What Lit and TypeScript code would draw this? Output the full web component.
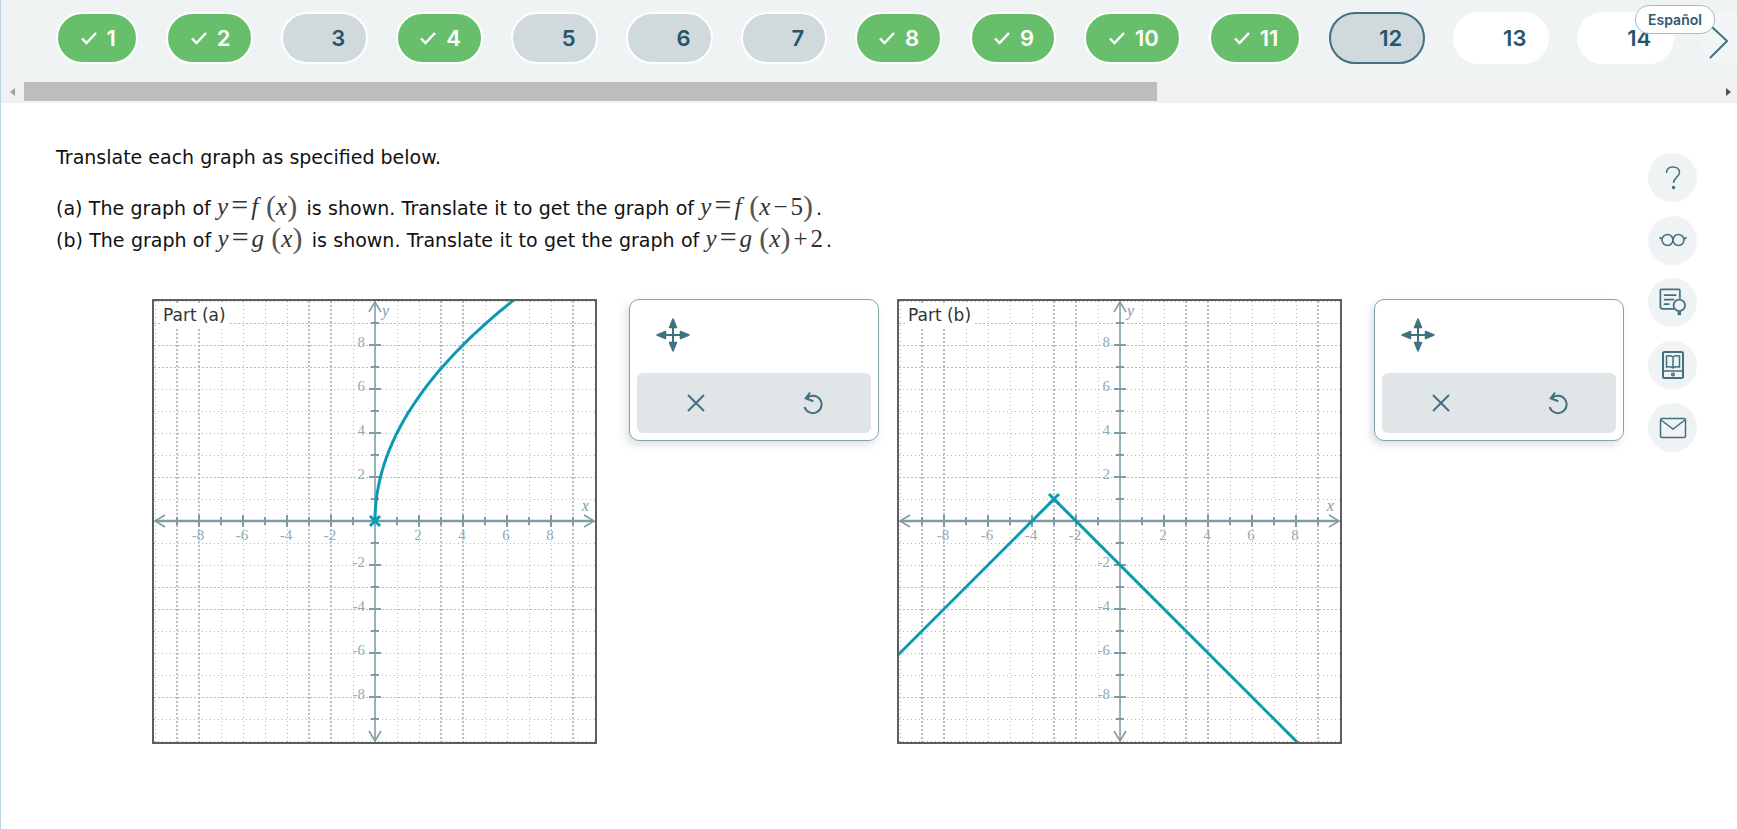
import { LitElement, css, html, svg } from 'lit';
import { customElement, property } from 'lit/decorators.js';

const UNIT = 22;
const CX = 223;
const CY = 222;
const SIZE = 445;
const px = (x: number) => CX + x * UNIT;
const py = (y: number) => CY - y * UNIT;
const range: number[] = [];
for (let i = -10; i <= 10; i++) range.push(i);
const THICK_V = [-9, -8, -3, -2, 3, 4, 9];
const DARK_H = [9, 8, 7, 2, -3, -4, -8];
const LABELS = [-8, -6, -4, -2, 2, 4, 6, 8];

@customElement('coord-graph')
export class CoordGraph extends LitElement {
  @property() label = '';
  @property() part = 'a';

  static styles = css`
    :host { display: block; width: 445px; height: 445px; flex: none; }
    svg { display: block; }
    .grid { stroke: #a9bcc3; stroke-width: 1; stroke-dasharray: 1 3; shape-rendering: crispEdges; }
    .grid.dark { stroke-dasharray: 2 2; stroke: #adbfc5; }
    .grid.thick { stroke-width: 2; stroke-dasharray: 2 2; stroke: #aec0c6; }
    .axis { stroke: #7f9ba3; fill: none; }
    .num { font: 15px "Liberation Serif", serif; fill: #93abb3; }
    .var { font: italic 16px "Liberation Serif", serif; fill: #7f9ba3; }
    .title { font: 17px "DejaVu Sans", sans-serif; fill: #333; }
    .plot { stroke: #0a9ab2; stroke-width: 3; fill: none; }
    .frame { stroke: #5e5e5e; stroke-width: 2; fill: none; }
  `;

  private curve() {
    if (this.part === 'a') {
      const pts: string[] = [];
      for (let i = 0; i <= 100; i++) {
        const x = (i / 100) ** 2 * 6.4;
        pts.push(`${px(x).toFixed(1)},${py(4 * Math.sqrt(x)).toFixed(1)}`);
      }
      return svg`<polyline class="plot" points=${pts.join(' ')}></polyline>${this.cross(0, 0)}`;
    }
    return svg`<polyline class="plot" points="${px(-10.2)},${py(-6.2)} ${px(-3)},${py(1)} ${px(8.2)},${py(-10.2)}"></polyline>${this.cross(-3, 1)}`;
  }

  private cross(x: number, y: number) {
    const a = px(x);
    const b = py(y);
    return svg`<path class="plot" d="M${a - 5} ${b - 5}L${a + 5} ${b + 5}M${a + 5} ${b - 5}L${a - 5} ${b + 5}"></path>`;
  }

  render() {
    return html`<svg width=${SIZE} height=${SIZE} viewBox="0 0 ${SIZE} ${SIZE}">
      <rect width=${SIZE} height=${SIZE} fill="#fff"></rect>
      ${range.map(i => svg`
        <line class="grid ${THICK_V.includes(i) ? 'thick' : ''}" x1=${px(i)} x2=${px(i)} y1="2" y2="443"></line>
        <line class="grid ${DARK_H.includes(i) ? 'dark' : ''}" x1="2" x2="443" y1=${py(i)} y2=${py(i)}></line>
      `)}
      <rect x="9" y="6" width="68" height="22" fill="#fff"></rect>
      <line class="axis" stroke-width="2.5" x1="3" x2="442" y1=${CY} y2=${CY}></line>
      <line class="axis" stroke-width="1.5" x1=${CX} x2=${CX} y1="3" y2="442"></line>
      ${range.filter(i => i !== 0 && Math.abs(i) < 10).map(i => {
        const len = i % 2 === 0 ? 6 : 4;
        return svg`
          <line class="axis" stroke-width="2" x1=${px(i)} x2=${px(i)} y1=${CY - len} y2=${CY + len}></line>
          <line class="axis" stroke-width="2" x1=${CX - len} x2=${CX + len} y1=${py(i)} y2=${py(i)}></line>`;
      })}
      <path class="axis" stroke-width="1.5" d="M13 ${CY - 6}L3 ${CY}L13 ${CY + 6}M432 ${CY - 6}L442 ${CY}L432 ${CY + 6}M${CX - 6} 13L${CX} 3L${CX + 6} 13M${CX - 6} 432L${CX} 442L${CX + 6} 432"></path>
      ${LABELS.map(v => svg`
        <text class="num" text-anchor="middle" x=${px(v) - 1} y=${CY + 19}>${v}</text>
        <text class="num" text-anchor="end" x=${CX - 10} y=${py(v) + 2}>${v}</text>
      `)}
      <text class="var" x=${px(9.4)} y=${CY - 10}>x</text>
      <text class="var" x=${CX + 7} y="17">y</text>
      <text class="title" x="11" y="22">${this.label}</text>
      <svg x="0" y="0" width=${SIZE} height=${SIZE}>${this.curve()}</svg>
      <rect class="frame" x="1" y="1" width="443" height="443"></rect>
    </svg>`;
  }
}

@customElement('graph-tools')
export class GraphTools extends LitElement {
  static styles = css`
    :host { display: block; flex: none; }
    .card {
      box-sizing: border-box;
      width: 250px;
      height: 142px;
      padding: 18px 7px 6px;
      background: #fff;
      border: 1px solid #86a2ab;
      border-radius: 10px;
      box-shadow: -3px 4px 8px rgba(90, 120, 130, .22);
    }
    .move { display: block; margin: 0 0 0 19px; }
    .buttons {
      display: flex;
      height: 60px;
      margin-top: 21px;
      background: #e0e6e8;
      border-radius: 6px;
    }
    .buttons div { flex: 1; display: flex; align-items: center; justify-content: center; }
    svg { fill: none; stroke: #41707f; stroke-width: 2; }
    .solid { fill: #41707f; stroke-linejoin: round; stroke-width: 1.5; }
  `;

  render() {
    return html`<div class="card">
      <svg class="move" width="34" height="34" viewBox="0 0 34 34">
        <path stroke-width="2" d="M17 5V29M5 17H29"></path>
        <path class="solid" d="M17 1L20.500 9.500H13.500Z"></path>
        <path class="solid" d="M17 33L20.500 24.500H13.500Z"></path>
        <path class="solid" d="M1 17L9.500 13.500V20.500Z"></path>
        <path class="solid" d="M33 17L24.500 13.500V20.500Z"></path>
      </svg>
      <div class="buttons">
        <div><svg width="24" height="24" viewBox="0 0 24 24"><path d="M4 4L20 20M20 4L4 20"></path></svg></div>
        <div><svg width="24" height="24" viewBox="0 0 24 24"><path d="M5.500 7.500A8.700 8.700 0 1 1 3.600 16M9 1.500L4.700 7.300L12.300 10.300"></path></svg></div>
      </div>
    </div>`;
  }
}

type PillState = 'done' | 'skipped' | 'current' | 'todo';
const PILLS: [number, PillState][] = [
  [1, 'done'], [2, 'done'], [3, 'skipped'], [4, 'done'], [5, 'skipped'], [6, 'skipped'], [7, 'skipped'],
  [8, 'done'], [9, 'done'], [10, 'done'], [11, 'done'], [12, 'current'], [13, 'todo'], [14, 'todo'],
];

@customElement('app-root')
export class AppRoot extends LitElement {
  static styles = css`
    :host {
      display: block;
      position: relative;
      box-sizing: border-box;
      width: 1737px;
      height: 829px;
      overflow: hidden;
      background: #fff;
      border-left: 1px solid #bcd2de;
      color: #111;
      font-family: "DejaVu Sans", sans-serif;
    }
    header { height: 103px; background: #eff3f4; overflow: hidden; }
    .pills { display: flex; gap: 28px; height: 52px; padding: 12px 0 0 55px; }
    .pill {
      box-sizing: border-box;
      flex: none;
      display: flex;
      align-items: center;
      gap: 10px;
      height: 52px;
      padding: 0 20.4px 0 22.5px;
      border: 2px solid #fff;
      border-radius: 26px;
      font: 600 22px "Inter", sans-serif;
      color: #24566b;
    }
    .pill svg { width: 16px; height: 16px; fill: none; stroke: #fff; stroke-width: 2.4; visibility: hidden; }
    .done { background: #68bf6b; color: #fff; }
    .done svg { visibility: visible; }
    .skipped { background: #d0d9dc; }
    .current { background: #d0d9dc; border-color: #41707f; }
    .todo { background: #fff; }
    .scrollbar { display: flex; align-items: center; height: 19px; margin-top: 18px; background: #f1f1f1; border-bottom: 2px solid #f1f1f1; }
    .arrow { flex: none; width: 0; height: 0; border-style: solid; border-width: 4px 0; border-color: transparent; }
    .arrow.left { margin: 0 9px 0 9px; border-right: 5px solid #a3a3a3; }
    .arrow.right { margin: 0 6px 0 auto; border-left: 5px solid #505050; }
    .thumb { width: 1133px; height: 19px; background: #bdbdbd; }
    .tip {
      position: absolute;
      left: 1634px;
      top: 5px;
      box-sizing: border-box;
      width: 80px;
      height: 29px;
      display: flex;
      align-items: center;
      justify-content: center;
      background: #fff;
      border: 1px solid #a9bcc4;
      border-radius: 14px;
      font: 600 14px "Inter", sans-serif;
      color: #2d5a6e;
    }
    .next { position: absolute; left: 1700px; top: 12px; width: 36px; height: 52px; background: rgba(255,255,255,.25); border-radius: 26px 0 0 26px; }
    .next svg { display: block; fill: none; stroke: #41707f; stroke-width: 2; }
    main { display: flex; justify-content: space-between; }
    .content { padding: 42px 0 0 55px; }
    p { margin: 0; font-size: 19px; }
    .intro { line-height: 24px; margin-bottom: 23px; }
    .line { line-height: 32px; height: 32px; white-space: nowrap; word-spacing: .3px; }
    .m { font: 25px/20px "Liberation Serif", serif; color: #333; margin: 0 3px 0 0; word-spacing: 0; }
    .m i { font-style: italic; }
    .par { font: 30px/20px "Liberation Serif", serif; vertical-align: -1px; color: #555; }
    .eq { font-size: 30px; line-height: 20px; margin: 0 3px; }
    .fn { margin-right: 8px; }
    .gn { margin-right: 1px; }
    .op { margin: 0 3px; }
    .graphs { display: flex; gap: 18px; margin: 43px 0 0 96px; }
    .part { display: flex; gap: 32px; }
    aside { display: flex; flex-direction: column; gap: 13.5px; margin: 50px 40px 0 0; }
    .round { width: 49px; height: 49px; border-radius: 50%; background: #eff3f4; display: flex; align-items: center; justify-content: center; }
    .round svg { fill: none; stroke: #41707f; stroke-width: 1.5; }
  `;

  private check() {
    return html`<svg viewBox="0 0 16 16"><path d="M1 8.500L5.500 13L15 3"></path></svg>`;
  }

  render() {
    return html`
      <header>
        <div class="pills">
          ${PILLS.map(([n, state]) => html`<div class="pill ${state}">${this.check()}<span>${n}</span></div>`)}
        </div>
        <div class="scrollbar">
          <span class="arrow left"></span>
          <div class="thumb"></div>
          <span class="arrow right"></span>
        </div>
      </header>
      <div class="next"><svg width="36" height="52" viewBox="0 0 36 52"><path d="M11 15L26 29L9 46"></path></svg></div>
      <div class="tip">Español</div>
      <main>
        <div class="content">
          <p class="intro">Translate each graph as specified below.</p>
          <p class="line">(a) The graph of <span class="m"><i>y</i><span class="eq">=</span><i class="fn">f</i><span class="par">(</span><i>x</i><span class="par">)</span></span> is shown. Translate it to get the graph of <span class="m"><i>y</i><span class="eq">=</span><i class="fn">f</i><span class="par">(</span><i>x</i><span class="op">−</span>5<span class="par">)</span></span>.</p>
          <p class="line">(b) The graph of <span class="m"><i>y</i><span class="eq">=</span><i class="gn">g</i> <span class="par">(</span><i>x</i><span class="par">)</span></span> is shown. Translate it to get the graph of <span class="m"><i>y</i><span class="eq">=</span><i class="gn">g</i> <span class="par">(</span><i>x</i><span class="par">)</span><span class="op">+</span>2</span>.</p>
          <div class="graphs">
            <div class="part"><coord-graph label="Part (a)" part="a"></coord-graph><graph-tools></graph-tools></div>
            <div class="part"><coord-graph label="Part (b)" part="b"></coord-graph><graph-tools></graph-tools></div>
          </div>
        </div>
        <aside>
          <div class="round"><svg width="24" height="28" viewBox="0 0 24 28"><path d="M5.500 9C5.500 4.500 8.500 3 12 3C15.500 3 18.500 5 18.500 8.500C18.500 13 12.500 13.500 12.500 19"></path><circle cx="12.500" cy="23.500" r="1" fill="#41707f"></circle></svg></div>
          <div class="round"><svg width="28" height="16" viewBox="0 0 28 16" stroke-width="2"><circle cx="8.500" cy="8" r="5.500"></circle><circle cx="19.500" cy="8" r="5.500"></circle><path d="M13 6.500C13.500 6 14.500 6 15 6.500M3 7L0.500 5.500M25 7L27.500 5.500"></path></svg></div>
          <div class="round"><svg width="30" height="31" viewBox="0 0 26 27" stroke-width="1.800"><path d="M14 19H4C3 19 2 19 2 17V3C2 2 3 2 3 2H18C19 2 19 3 19 3V10"></path><path d="M5 7H16M5 11H14M5 15H10"></path><circle cx="18.500" cy="16" r="5"></circle><path stroke-width="3" d="M17 23H20"></path></svg></div>
          <div class="round"><svg width="24" height="30" viewBox="0 0 24 30"><rect x="2" y="2" width="20" height="26" rx="1.500" stroke-width="2"></rect><path d="M12 7C10 5.500 8 5.500 5.500 6V17C8 16.500 10 16.500 12 18C14 16.500 16 16.500 18.500 17V6C16 5.500 14 5.500 12 7V18M3 21H21"></path><circle cx="12" cy="24.500" r="1.300"></circle></svg></div>
          <div class="round"><svg width="28" height="22" viewBox="0 0 28 22" stroke-width="2"><rect x="1.500" y="1.500" width="25" height="19" rx="1.500"></rect><path d="M2 3L14 12L26 3"></path></svg></div>
        </aside>
      </main>
    `;
  }
}
